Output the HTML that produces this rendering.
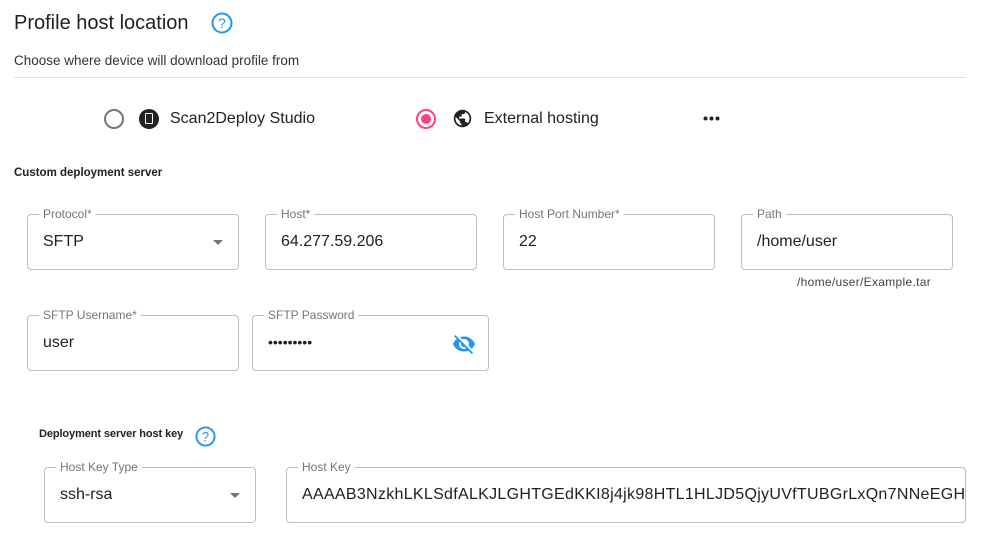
<!DOCTYPE html>
<html><head><meta charset="utf-8"><style>
*{box-sizing:border-box;margin:0;padding:0}
body{width:987px;height:551px;background:#fff;font-family:"Liberation Sans",sans-serif;color:#212121;position:relative;overflow:hidden}
.a{position:absolute;white-space:nowrap}
.f{position:absolute;border:1px solid #bdbdbd;border-radius:4px;height:56px}
.f .l{position:absolute;top:-8px;left:11px;background:#fff;padding:0 4px;font-size:12px;color:#757575;line-height:14px}
.f .v{position:absolute;left:15px;top:18px;font-size:16px;color:#212121;white-space:nowrap;overflow:hidden}
.tri{position:absolute;right:15px;top:25px;width:0;height:0;border-left:5px solid transparent;border-right:5px solid transparent;border-top:5px solid #757575}
</style></head><body>
<div class="a" style="left:14px;top:12px;font-size:20px;color:#212121">Profile host location</div>
<svg class="a" style="left:211px;top:12px" width="22" height="22" viewBox="0 0 22 22"><circle cx="11" cy="11" r="9.5" fill="none" stroke="#2196f3" stroke-width="2"/><text x="11" y="16" font-size="14" text-anchor="middle" fill="#2196f3" font-family="Liberation Sans">?</text></svg>
<div class="a" style="left:14px;top:53px;font-size:13.5px;color:#333">Choose where device will download profile from</div>
<div class="a" style="left:14px;top:77px;width:952px;height:1px;background:#e0e0e0"></div>
<div class="a" style="left:104px;top:109px;width:20px;height:20px;border:2px solid #757575;border-radius:50%"></div>
<div class="a" style="left:139px;top:109px;width:20px;height:20px;background:#222;border-radius:50%"></div>
<div class="a" style="left:145px;top:113px;width:8px;height:11px;border:1.5px solid #fff;border-radius:1px"></div>
<div class="a" style="left:170px;top:110px;font-size:16px">Scan2Deploy Studio</div>
<div class="a" style="left:416px;top:109px;width:20px;height:20px;border:2px solid #ff4081;border-radius:50%"></div>
<div class="a" style="left:421px;top:114px;width:10px;height:10px;background:#ff4081;border-radius:50%"></div>
<svg class="a" style="left:452px;top:108px" width="21" height="21" viewBox="0 0 24 24"><path fill="#222" d="M12 2C6.48 2 2 6.48 2 12s4.48 10 10 10 10-4.48 10-10S17.52 2 12 2zm-1 17.930c-3.95-.49-7-3.85-7-7.93 0-.62.08-1.21.21-1.79L9 15v1c0 1.1.9 2 2 2v1.93zm6.9-2.54c-.26-.81-1-1.39-1.9-1.39h-1v-3c0-.55-.45-1-1-1H8v-2h2c.55 0 1-.45 1-1V7h2c1.1 0 2-.9 2-2v-.41c2.93 1.19 5 4.06 5 7.41 0 2.08-.8 3.970-2.1 5.39z"/></svg>
<div class="a" style="left:484px;top:110px;font-size:16px">External hosting</div>
<svg class="a" style="left:703px;top:116px" width="18" height="5"><circle cx="2.5" cy="2.5" r="2" fill="#222"/><circle cx="8.5" cy="2.5" r="2" fill="#222"/><circle cx="14.5" cy="2.5" r="2" fill="#222"/></svg>
<div class="a" style="left:14px;top:167px;font-size:11.5px;font-weight:bold">Custom deployment server</div>

<div class="f" style="left:27px;top:214px;width:212px"><span class="l">Protocol*</span><span class="v">SFTP</span><span class="tri"></span></div>
<div class="f" style="left:265px;top:214px;width:212px"><span class="l">Host*</span><span class="v">64.277.59.206</span></div>
<div class="f" style="left:503px;top:214px;width:212px"><span class="l">Host Port Number*</span><span class="v">22</span></div>
<div class="f" style="left:741px;top:214px;width:212px"><span class="l">Path</span><span class="v">/home/user</span></div>
<div class="a" style="left:797px;top:275px;font-size:12px;color:#424242;letter-spacing:0.3px">/home/user/Example.tar</div>

<div class="f" style="left:27px;top:315px;width:212px"><span class="l">SFTP Username*</span><span class="v">user</span></div>
<div class="f" style="left:252px;top:315px;width:237px"><span class="l">SFTP Password</span><span class="v" style="font-size:14px;top:18px;letter-spacing:0px">•••••••••</span>
<svg style="position:absolute;right:12px;top:16px" width="24" height="24" viewBox="0 0 24 24"><path fill="#2196f3" d="M12 7c2.76 0 5 2.24 5 5 0 .65-.13 1.26-.36 1.830l2.92 2.92c1.51-1.26 2.7-2.89 3.43-4.75-1.73-4.39-6-7.5-11-7.5-1.4 0-2.74.25-3.98.7l2.16 2.16C10.74 7.13 11.35 7 12 7zM2 4.27l2.28 2.28.46.46C3.08 8.3 1.78 10.02 1 12c1.73 4.39 6 7.5 11 7.5 1.55 0 3.03-.3 4.38-.84l.42.42L19.73 22 21 20.73 3.27 3 2 4.27zM7.53 9.8l1.55 1.55c-.05.21-.08.43-.08.65 0 1.66 1.34 3 3 3 .22 0 .44-.03.65-.08l1.55 1.55c-.67.33-1.41.53-2.2.53-2.76 0-5-2.240-5-5 0-.79.2-1.53.53-2.2z"/></svg></div>

<div class="a" style="left:39px;top:428px;font-size:11px;font-weight:bold;letter-spacing:-0.1px">Deployment server host key</div>
<svg class="a" style="left:195px;top:426px" width="21" height="21" viewBox="0 0 22 22"><circle cx="11" cy="11" r="9.5" fill="none" stroke="#2196f3" stroke-width="2"/><text x="11" y="16" font-size="14" text-anchor="middle" fill="#2196f3" font-family="Liberation Sans">?</text></svg>

<div class="f" style="left:44px;top:467px;width:212px"><span class="l">Host Key Type</span><span class="v">ssh-rsa</span><span class="tri"></span></div>
<div class="f" style="left:286px;top:467px;width:680px"><span class="l">Host Key</span><span class="v" style="width:663px;letter-spacing:0.3px">AAAAB3NzkhLKLSdfALKJLGHTGEdKKI8j4jk98HTL1HLJD5QjyUVfTUBGrLxQn7NNeEGH</span></div>
</body></html>
